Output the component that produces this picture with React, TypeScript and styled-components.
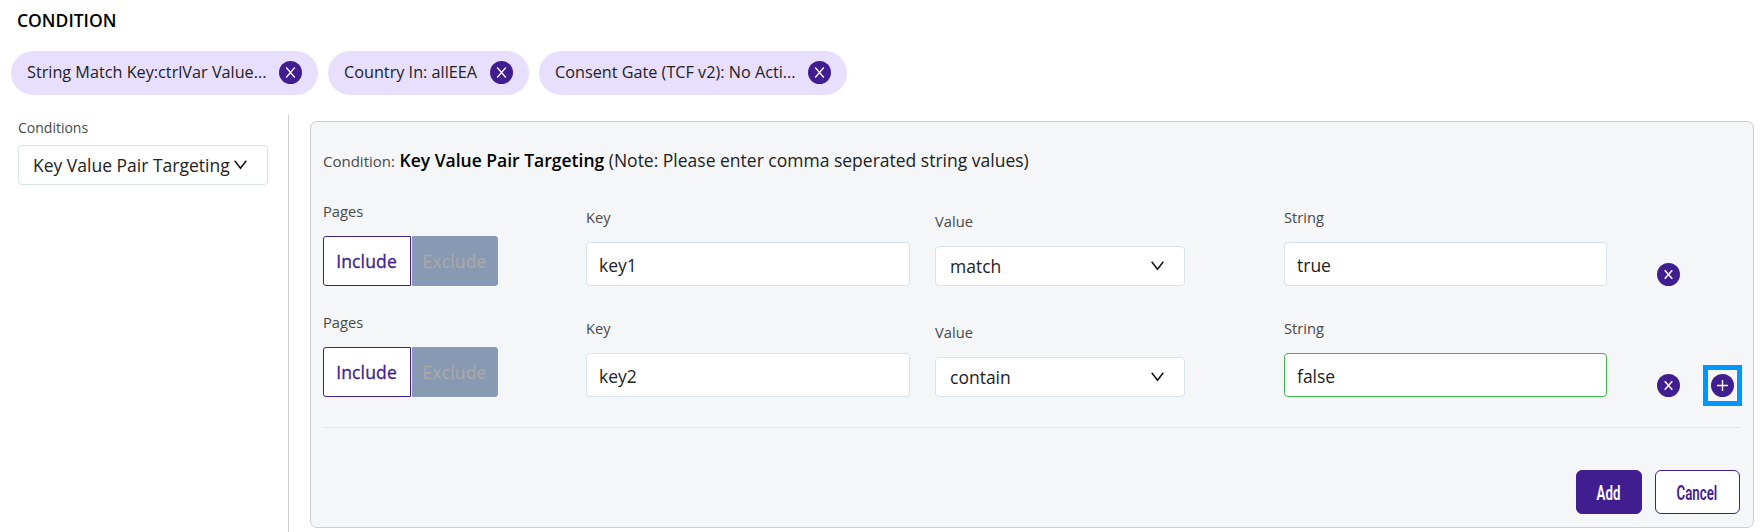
import React from "react";
import styled, { createGlobalStyle } from "styled-components";

const Global = createGlobalStyle`
  * { box-sizing: border-box; }
  body { margin: 0; background: #fff; font-family: "Open Sans", "Noto Sans", sans-serif; color: #222; }
  button, input { font-family: inherit; margin: 0; }
`;

const Page = styled.main`
  width: 1761px;
  height: 532px;
  overflow: hidden;
  display: flex;
  flex-direction: column;
`;
const Title = styled.h2`
  margin: 8px 0 0 17px;
  height: 25px;
  font-size: 17.5px;
  line-height: 25px;
  font-weight: 600;
  color: #000;
`;
const Chips = styled.div`
  display: flex;
  gap: 10px;
  margin: 18px 0 0 11px;
`;
const Chip = styled.div<{ $width: number }>`
  width: ${(p) => p.$width}px;
  height: 44px;
  padding: 0 16px 1px;
  border-radius: 22px;
  background: #e8dfff;
  display: flex;
  align-items: center;
  justify-content: space-between;
`;
const ChipText = styled.span`
  font-size: 16.23px;
  line-height: 23px;
  white-space: nowrap;
`;
const Body = styled.div`
  display: flex;
  flex: 1;
  margin-top: 20px;
`;
const Sidebar = styled.aside`
  width: 289px;
  padding: 3px 0 0 18px;
  border-right: 1px solid #d0d0d0;
`;
const Label = styled.label`
  display: block;
  height: 20px;
  line-height: 18px;
  margin-bottom: 14px;
  font-size: 14.7px;
  color: #494949;
  white-space: nowrap;
`;
const SidebarLabel = styled(Label)`
  line-height: 20px;
  margin-bottom: 7px;
  font-size: 14px;
`;
const SelectBox = styled.div`
  width: 250px;
  height: 40px;
  border: 1px solid #d8e3ea;
  border-radius: 4px;
  background: #fff;
  padding: 0 20px 1px 14px;
  display: flex;
  align-items: center;
  justify-content: space-between;
  font-size: 17.5px;
  white-space: nowrap;
`;
const Panel = styled.section`
  width: 1444px;
  height: 407px;
  margin: 6px 0 0 21px;
  padding: 0 13px 0 12px;
  border: 1px solid #cbcdd0;
  border-radius: 7px;
  background: #f4f6f8;
`;
const PanelHeading = styled.div`
  margin-top: 26px;
  height: 26px;
  line-height: 24px;
  font-size: 17.5px;
  white-space: nowrap;
  small { font-size: 15px; color: #494949; }
  strong { font-weight: 600; color: #000; }
`;
const Row = styled.div<{ $top: number }>`
  display: flex;
  align-items: flex-end;
  height: 84px;
  margin-top: ${(p) => p.$top}px;
`;
const Field = styled.div<{ $span: number }>`
  width: ${(p) => p.$span}px;
  flex: none;
`;
const Toggle = styled.div`
  display: flex;
  gap: 1px;
  height: 50px;
`;
const ToggleButton = styled.button<{ $active?: boolean }>`
  width: ${(p) => (p.$active ? 88 : 86)}px;
  padding: 0 1px 1px 0;
  border: 1px solid ${(p) => (p.$active ? "#411e8f" : "#8799b3")};
  border-radius: ${(p) => (p.$active ? "3px 0 0 3px" : "0 3px 3px 0")};
  background: ${(p) => (p.$active ? "#fff" : "#8799b3")};
  color: ${(p) => (p.$active ? "#411e8f" : "#a8a8a9")};
  font-size: 17.5px;
  font-weight: 500;
  letter-spacing: 0.15px;
  -webkit-text-stroke: 0.3px currentColor;
`;
const TextInput = styled.input<{ $valid?: boolean; $width: number }>`
  display: block;
  width: ${(p) => p.$width}px;
  height: 44px;
  padding: 1px 13px 0 12px;
  border: 1px solid ${(p) => (p.$valid ? "#3cb54f" : "#d8e3ea")};
  border-radius: 4px;
  outline: none;
  background: #fff;
  color: #222;
  font-size: 17.5px;
`;
const RoundButton = styled.button`
  width: 23px;
  height: 23px;
  flex: none;
  padding: 0;
  border: 0;
  border-radius: 50%;
  background: #411e8f;
  display: flex;
  align-items: center;
  justify-content: center;
`;
const Highlight = styled.div`
  width: 39px;
  height: 41px;
  border: 5px solid #0096ff;
  margin: 0 -3px -9px 23px;
  flex: none;
  display: flex;
  align-items: center;
  justify-content: center;
`;
const Rule = styled.hr`
  height: 1px;
  border: 0;
  margin: 30px 0 42px;
  background: #e3e6e9;
`;
const Actions = styled.div`
  display: flex;
  justify-content: flex-end;
  gap: 13px;
`;
const ActionButton = styled.button<{ $primary?: boolean }>`
  width: ${(p) => (p.$primary ? 66 : 85)}px;
  height: 44px;
  padding: 0 1px 0 0;
  border: 1px solid #411e8f;
  border-radius: 6px;
  background: ${(p) => (p.$primary ? "#411e8f" : "#fff")};
  color: ${(p) => (p.$primary ? "#fff" : "#411e8f")};
  font-size: 19.5px;
  font-weight: 600;
`;
const Condensed = styled.span`
  display: inline-block;
  font-family: Roboto, sans-serif;
  transform: scaleX(0.68);
  margin: 0 -20px;
`;

const Cross = ({ tall }: { tall?: boolean }) => (
  <svg width="11" height="11" viewBox="0 0 11 11" fill="none" stroke="#fff" strokeWidth={tall ? 1.2 : 1.5}>
    {tall ? <path d="M1.2 .5 9.8 10.5M9.8 .5 1.2 10.5" /> : <path d="M1.7 1.2 9.3 9.8M9.3 1.2 1.7 9.8" />}
  </svg>
);
const Plus = () => (
  <svg width="11" height="11" viewBox="0 0 11 11" fill="none" stroke="#fff" strokeWidth="1.4">
    <path d="M5.5 0V11M0 5.5H11" />
  </svg>
);
const Chevron = () => (
  <svg width="13" height="10" viewBox="0 0 13 10" fill="none" stroke="#111" strokeWidth="1.5">
    <path d="M.7 .8 6.5 8.2 12.3 .8" />
  </svg>
);

const chips = [
  { text: "String Match Key:ctrlVar Value...", width: 307 },
  { text: "Country In: allEEA", width: 201 },
  { text: "Consent Gate (TCF v2): No Acti...", width: 308 },
];
const rows = [
  { key: "key1", value: "match", string: "true" },
  { key: "key2", value: "contain", string: "false" },
];

export default function App() {
  return (
    <Page>
      <Global />
      <Title>CONDITION</Title>
      <Chips>
        {chips.map((c) => (
          <Chip key={c.text} $width={c.width}>
            <ChipText>{c.text}</ChipText>
            <RoundButton aria-label="Remove"><Cross tall /></RoundButton>
          </Chip>
        ))}
      </Chips>
      <Body>
        <Sidebar>
          <SidebarLabel>Conditions</SidebarLabel>
          <SelectBox>Key Value Pair Targeting<Chevron /></SelectBox>
        </Sidebar>
        <Panel>
          <PanelHeading>
            <small>Condition:</small> <strong>Key Value Pair Targeting</strong> (Note: Please enter comma seperated string values)
          </PanelHeading>
          {rows.map((r, i) => {
            const last = i === rows.length - 1;
            return (
              <Row key={r.key} $top={i === 0 ? 28 : 27}>
                <Field $span={263}>
                  <Label>Pages</Label>
                  <Toggle>
                    <ToggleButton $active>Include</ToggleButton>
                    <ToggleButton disabled>Exclude</ToggleButton>
                  </Toggle>
                </Field>
                <Field $span={349}>
                  <Label>Key</Label>
                  <TextInput $width={324} defaultValue={r.key} />
                </Field>
                <Field $span={349}>
                  <Label>Value</Label>
                  <SelectBox>{r.value}<Chevron /></SelectBox>
                </Field>
                <Field $span={373}>
                  <Label>String</Label>
                  <TextInput $width={323} defaultValue={r.string} $valid={last} />
                </Field>
                <RoundButton aria-label="Remove"><Cross /></RoundButton>
                {last && (
                  <Highlight>
                    <RoundButton aria-label="Add row"><Plus /></RoundButton>
                  </Highlight>
                )}
              </Row>
            );
          })}
          <Rule />
          <Actions>
            <ActionButton $primary><Condensed>Add</Condensed></ActionButton>
            <ActionButton><Condensed>Cancel</Condensed></ActionButton>
          </Actions>
        </Panel>
      </Body>
    </Page>
  );
}
